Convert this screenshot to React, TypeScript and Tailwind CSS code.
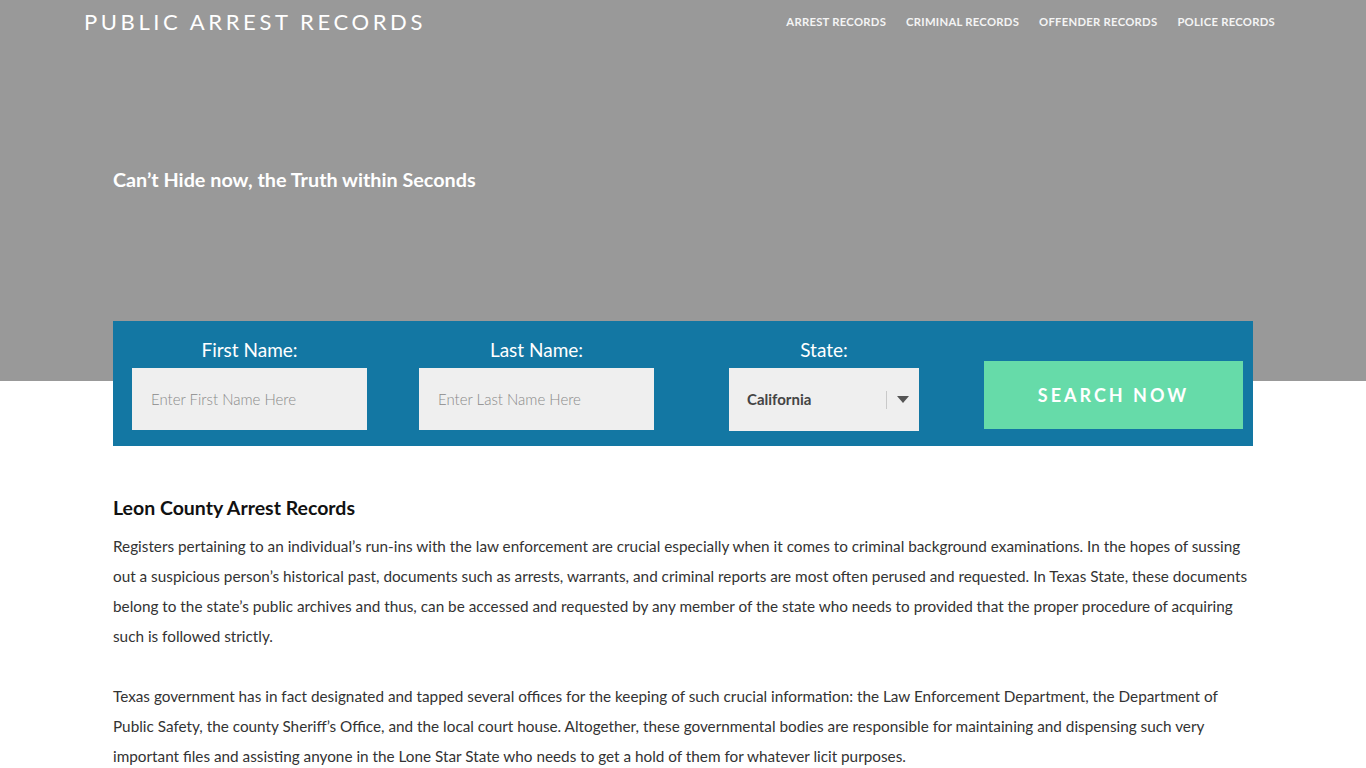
const navLinks = ["ARREST RECORDS", "CRIMINAL RECORDS", "OFFENDER RECORDS", "POLICE RECORDS"];

function Field({ label, placeholder, width }: { label: string; placeholder: string; width: string }) {
  return (
    <div className={`flex flex-col items-center ${width}`}>
      <label className="text-[19px] leading-[26px] text-white mb-[5px]">{label}</label>
      <input
        placeholder={placeholder}
        className="w-full h-[62px] bg-[#efefef] px-[19px] text-[15px] text-[#555] placeholder:text-[#8a8a8a] placeholder:font-light outline-none"
      />
    </div>
  );
}

export default function App() {
  return (
    <div className="min-h-screen bg-white font-['Lato','Liberation_Sans',sans-serif]">
      {/* hero */}
      <div className="bg-[#999999] h-[381px]">
        <div className="max-w-[1200px] mx-auto flex items-start justify-between pl-[1px] pr-[8px]">
          <a className="text-[22px] leading-[44px] tracking-[3.6px] text-white font-normal">PUBLIC ARREST RECORDS</a>
          <nav className="flex gap-[20px] pt-[14px]">
            {navLinks.map((l) => (
              <a key={l} className="text-[11.3px] font-bold text-[#f4f4f4] tracking-[0.25px]">
                {l}
              </a>
            ))}
          </nav>
        </div>
        <div className="max-w-[1140px] mx-auto pt-[121px]">
          <h2 className="text-[19.8px] font-bold text-white">Can’t Hide now, the Truth within Seconds</h2>
        </div>
      </div>

      <div className="max-w-[1140px] mx-auto -mt-[60px] relative">
        {/* search form */}
        <form className="bg-[#1377a3] h-[125px] pl-[19px] pr-[10px] pt-[16px] flex items-start">
          <Field label="First Name:" placeholder="Enter First Name Here" width="w-[235px]" />
          <div className="w-[52px]" />
          <Field label="Last Name:" placeholder="Enter Last Name Here" width="w-[235px]" />
          <div className="w-[75px]" />
          <div className="flex flex-col items-center w-[190px]">
            <label className="text-[19px] leading-[26px] text-white mb-[5px]">State:</label>
            <div className="w-full h-[63px] bg-[#efefef] flex items-center pl-[18px] pr-[10px]">
              <span className="flex-1 text-[15px] font-bold text-[#444]">California</span>
              <span className="w-px h-[18px] bg-[#c9c9c9] mr-[10px]" />
              <svg width="12" height="7" viewBox="0 0 12 7">
                <path d="M0 0 L12 0 L6 7 Z" fill="#555" />
              </svg>
            </div>
          </div>
          <div className="w-[65px]" />
          <button
            type="button"
            className="mt-[24px] w-[259px] h-[68px] bg-[#66dba9] text-white text-[18px] font-bold tracking-[3px]"
          >
            SEARCH NOW
          </button>
        </form>

        {/* article */}
        <div className="pt-[48px] text-[#333]">
          <h1 className="text-[19.5px] font-bold text-[#111] leading-[28px] mb-[9px]">Leon County Arrest Records</h1>
          <p className="text-[15.3px] leading-[30px] mb-[30px]">
            Registers pertaining to an individual’s run-ins with the law enforcement are crucial especially when it comes to
            criminal background examinations. In the hopes of sussing
            <br />
            out a suspicious person’s historical past, documents such as arrests, warrants, and criminal reports are most often
            perused and requested. In Texas State, these documents
            <br />
            belong to the state’s public archives and thus, can be accessed and requested by any member of the state who needs to
            provided that the proper procedure of acquiring
            <br />
            such is followed strictly.
          </p>
          <p className="text-[15.3px] leading-[30px]">
            Texas government has in fact designated and tapped several offices for the keeping of such crucial information: the
            Law Enforcement Department, the Department of
            <br />
            Public Safety, the county Sheriff’s Office, and the local court house. Altogether, these governmental bodies are
            responsible for maintaining and dispensing such very
            <br />
            important files and assisting anyone in the Lone Star State who needs to get a hold of them for whatever licit
            purposes.
          </p>
        </div>
      </div>
    </div>
  );
}
